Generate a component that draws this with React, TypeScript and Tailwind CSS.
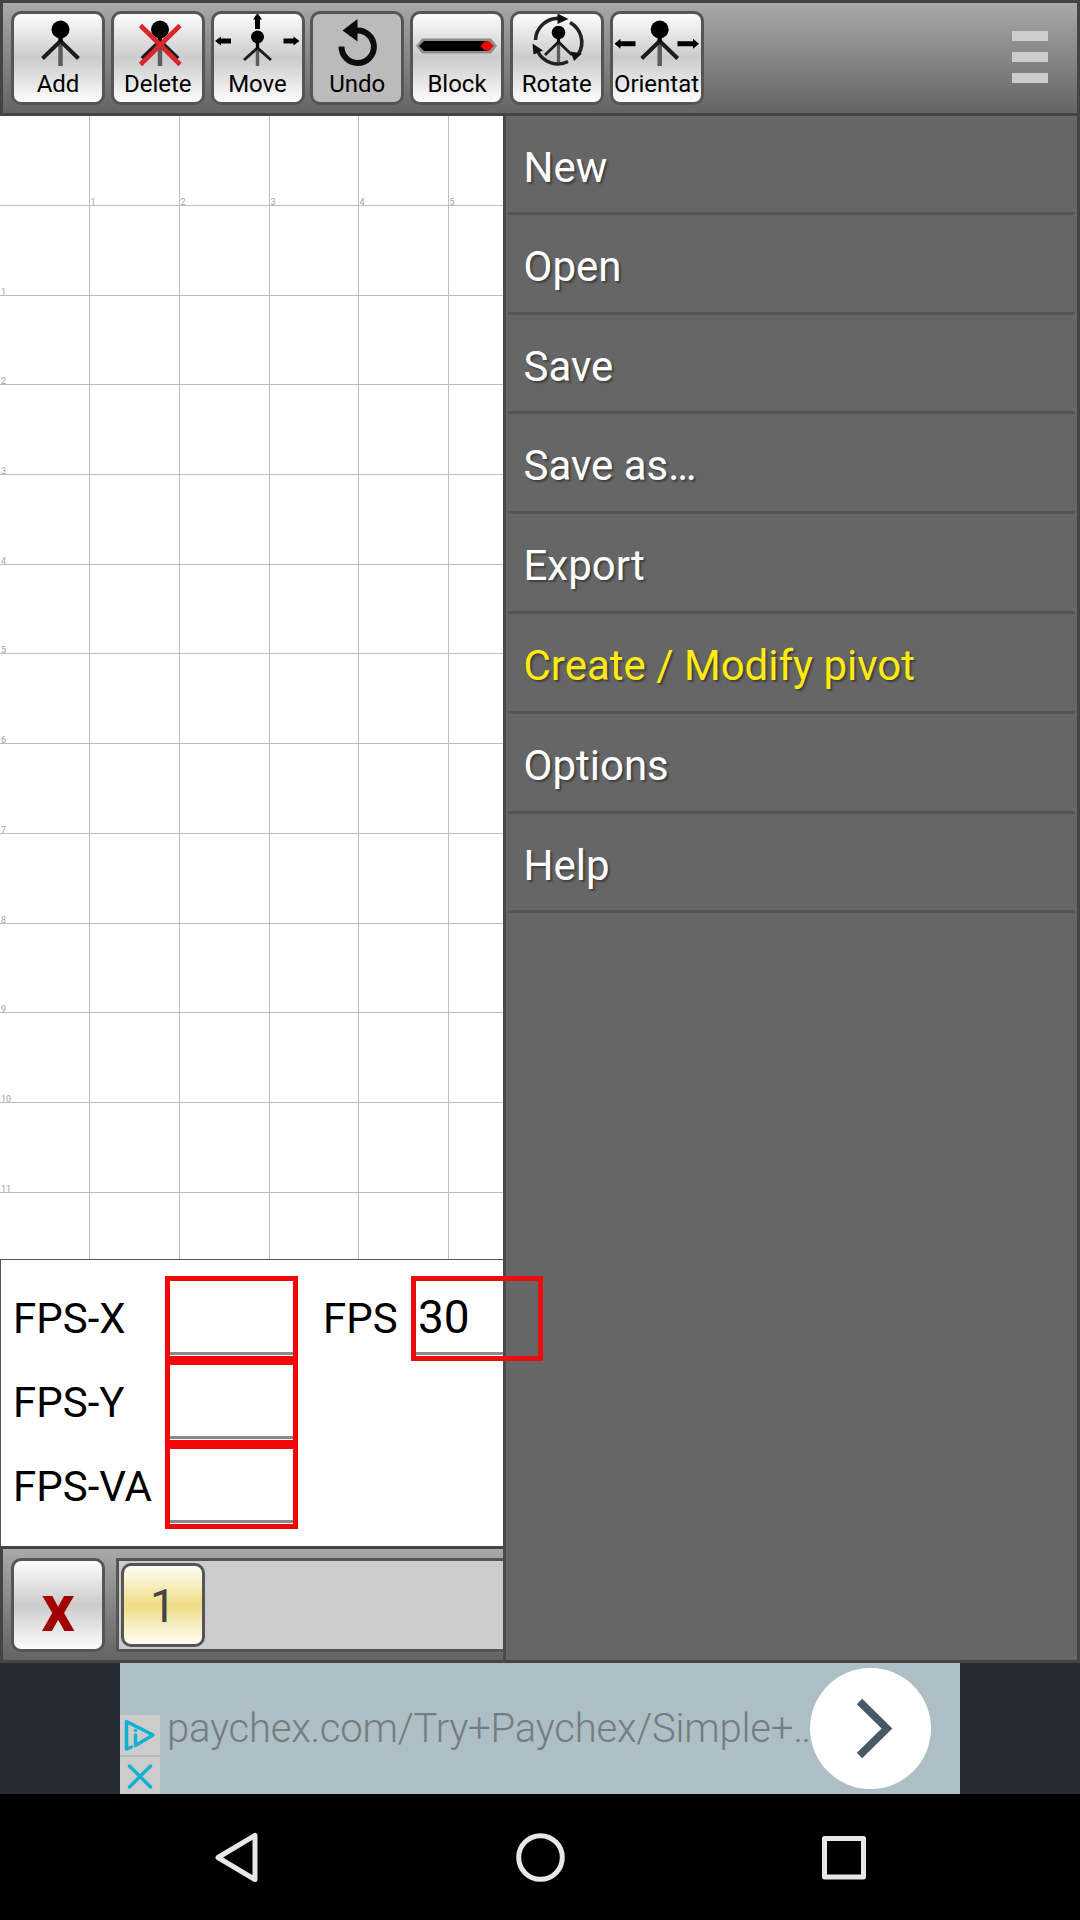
import type { ReactNode } from "react";

type FigureProps = { x: number; headY: number; r: number; neck: number; reach: number; handY: number; footY: number; w?: number };

function Figure({ x, headY, r, neck, reach, handY, footY, w = 4 }: FigureProps) {
  return (
    <g fill="none">
      <path d={`M${x} ${headY}V${footY}`} stroke="#5c5c5c" strokeWidth={w + 0.5} />
      <path d={`M${x - reach} ${handY}L${x} ${neck}L${x + reach} ${handY}`} stroke="#1c1c1c" strokeWidth={w} />
      <circle cx={x} cy={headY} r={r} fill="#000" />
      <path d={`M${x} ${headY}V${neck + 1}`} stroke="#000" strokeWidth={w} />
    </g>
  );
}

function Icon({ children }: { children: ReactNode }) {
  return (
    <svg viewBox="0 0 88 54" className="block h-[54px] w-[88px] shrink-0 overflow-visible">
      {children}
    </svg>
  );
}

const big = { headY: 15.5, r: 9, neck: 27, reach: 18, handY: 44.5, footY: 52 };

const tools = [
  { label: "Add", icon: <Figure x={46.5} {...big} /> },
  {
    label: "Delete",
    icon: (
      <>
        <Figure x={46} {...big} />
        <path d="M26.5 11.5L66 50.5M66 11.5L26.5 50.5" stroke="#d9262a" strokeWidth="4.6" />
      </>
    ),
  },
  {
    label: "Move",
    icon: (
      <>
        <Figure x={43.5} headY={23} r={6.5} neck={34} reach={13.5} handY={46} footY={52} w={3} />
        <path d="M43.5 -1l4.5 6.5h-2V15h-5V5.5h-2z" />
        <path d="M1 27l6-4.5v2h10v5H7v2z" />
        <path d="M85.5 27l-6-4.5v2h-10v5h10v2z" />
      </>
    ),
  },
  {
    label: "Undo",
    icon: (
      <>
        <path d="M28.5 32.5A16.2 16.2 0 1 0 44 16.6" fill="none" stroke="#0c0c0c" strokeWidth="6" />
        <path d="M29.5 16.5L44.5 5V27.5z" fill="#0c0c0c" />
      </>
    ),
  },
  {
    label: "Block",
    icon: (
      <>
        <path d="M3 32l6-7.5h69L84 32l-6 7.5H9z" fill="#8d8d8d" />
        <path d="M6 32l5-5h63l6 5l-6 5H11z" />
        <path d="M67.5 32l4-4.5h5l4 4.5l-4 4.5h-5z" fill="#f00" />
      </>
    ),
  },
  {
    label: "Rotate",
    icon: (
      <>
        <Figure x={45.5} headY={18.5} r={6.8} neck={28} reach={13.5} handY={41} footY={48} w={2.8} />
        <path
          d="M22.5 26A22.5 22.5 0 0 1 47 4.5M57 8.5A22.5 22.5 0 0 1 65.5 40M55 47.5A22.5 22.5 0 0 1 25 38"
          fill="none"
          stroke="#222"
          strokeWidth="3.6"
        />
        <path d="M44.5 -0.5L55.5 5L44.5 10zM57.5 37.5l11.5 2l-8 7.5zM19.5 29.5l10.5 7l-9.5 4z" fill="#111" />
      </>
    ),
  },
  {
    label: "Orientat",
    icon: (
      <>
        <Figure x={46.7} {...big} />
        <path d="M1.5 29.7l6-5v2.5h15v5h-15v2.5z" />
        <path d="M86 29.7l-6-5v2.5H64.5v5H80v2.5z" />
      </>
    ),
  },
];

const menu = ["New", "Open", "Save", "Save as…", "Export", "Create / Modify pivot", "Options", "Help"];
const STEP = 89.7;

function Grid() {
  return (
    <svg viewBox="0 0 503 1143" className="block h-[1143px] w-[503px] shrink-0" fontFamily="Roboto, sans-serif" fontSize="9" fill="#a3a3a3">
      {Array.from({ length: 5 }, (_, i) => {
        const x = Math.floor((i + 1) * STEP);
        return (
          <g key={i}>
            <rect x={x} y={0} width={1} height={1143} fill="#bdbdbd" />
            <text x={x + 1.5} y={89}>{i + 1}</text>
          </g>
        );
      })}
      {Array.from({ length: 12 }, (_, i) => {
        const y = Math.floor((i + 1) * STEP - 0.3);
        return (
          <g key={i}>
            <rect x={0} y={y} width={503} height={1} fill="#bdbdbd" />
            {i > 0 && <text x={1} y={y}>{i}</text>}
          </g>
        );
      })}
    </svg>
  );
}

function Header() {
  return (
    <header className="flex h-[116px] shrink-0 justify-between border-[3px] border-[#444] bg-linear-to-b from-[#a9a9a9] to-[#646464] pt-2 pr-[29px] pl-2">
      <div className="flex gap-[5.75px]">
        {tools.map((t) => (
          <button
            key={t.label}
            className={
              "flex h-[94px] w-[94px] flex-col overflow-hidden rounded-[10px] border-[3px] border-[#555] " +
              (t.label === "Undo" ? "bg-[#bbb]" : "bg-linear-to-b from-[#fdfdfd] via-[#cbcbcb] to-[#fdfdfd]")
            }
          >
            <Icon>{t.icon}</Icon>
            <span className="w-full text-center text-[24px] leading-[32px] whitespace-nowrap text-black">{t.label}</span>
          </button>
        ))}
      </div>
      <div className="mt-5 flex w-9 flex-col gap-[11px]">
        <i className="h-2.5 bg-[#ccc]" />
        <i className="h-2.5 bg-[#ccc]" />
        <i className="h-2.5 bg-[#ccc]" />
      </div>
    </header>
  );
}

function FpsPanel() {
  return (
    <section className="flex h-[287px] shrink-0 border-t border-l border-[#555] bg-white pt-4 pl-3 text-[42px] text-black">
      <div className="flex w-[152px] shrink-0 flex-col">
        {["FPS-X", "FPS-Y", "FPS-VA"].map((l) => (
          <span key={l} className="h-[84px] leading-[85px] whitespace-nowrap">{l}</span>
        ))}
      </div>
      <div className="flex w-[133px] shrink-0 flex-col">
        {[0, 1, 2].map((i) => (
          <div key={i} className="-mb-px flex h-[85px] shrink-0 flex-col justify-end border-[5px] border-[#f20808] pb-px">
            <i className="h-[3px] bg-[#8a8a88]" />
          </div>
        ))}
      </div>
      <span className="ml-[25px] w-[88px] shrink-0 leading-[85px]">FPS</span>
      <div className="relative z-10 flex h-[85px] w-[132px] shrink-0 flex-col justify-end border-[5px] border-[#e80e0e] pb-px">
        <span className="pl-0.5 text-[46px] leading-[70px]">30</span>
        <i className="h-[3px] w-[87px] bg-[#8a8a88]" />
      </div>
    </section>
  );
}

function FrameBar() {
  return (
    <section className="flex h-[117px] shrink-0 gap-[11px] border-y-[3px] border-l-[3px] border-[#444] bg-linear-to-b from-[#a9a9a9] to-[#646464] pt-[9px] pl-2">
      <button className="h-[94px] w-[94px] shrink-0 rounded-[10px] border-[3px] border-[#555] bg-linear-to-b from-[#fdfdfd] via-[#cbcbcb] to-[#fdfdfd] text-center text-[66px] font-bold text-[#a00000]">
        <span className="block pt-1 leading-[88px]">x</span>
      </button>
      <div className="h-[94px] grow border-y-[3px] border-l-[3px] border-[#555] bg-[#ccc] pt-0.5 pl-0.5">
        <button className="block h-[84px] w-[84px] rounded-[10px] border-[3px] border-[#555] bg-linear-to-b from-[#fffdf4] via-[#efdd85] to-[#fffdf4] text-center text-[46px] leading-[80px] text-[#444]">
          1
        </button>
      </div>
    </section>
  );
}

function SideMenu() {
  return (
    <nav className="grow border-r-[3px] border-b-[3px] border-l-[3px] border-r-[#444] border-b-[#444] border-l-[#4a4a4a] bg-[#666] pr-0.5 pl-0.5">
      {menu.map((m, i) => (
        <div
          key={m}
          className={
            "border-b-[3px] border-[#555] pl-[15.5px] text-[42px] leading-[104.6px] whitespace-nowrap [text-shadow:2px_2px_2px_#3f3f3f] " +
            (i === 0 ? "h-[98.8px] " : "h-[99.8px] ") +
            (i === 5 ? "text-[#ffeb0f]" : "text-white")
          }
        >
          {m}
        </div>
      ))}
    </nav>
  );
}

function Ad() {
  return (
    <section className="flex h-[131px] shrink-0 justify-center bg-[#262a33]">
      <div className="flex w-[840px] bg-[#aebec5]">
        <div className="flex w-10 shrink-0 flex-col justify-end gap-0.5">
          <svg viewBox="0 0 40 40" className="h-10 w-10 bg-[#ccc]" fill="none" stroke="#12b0d3" strokeWidth="3.5" strokeLinejoin="round" strokeLinecap="round">
            <path d="M11.5 32L6.5 34V6.5L33 20L15.5 30.5V20" />
            <path d="M15.5 15.5v.1" />
          </svg>
          <svg viewBox="0 0 40 37" className="h-[37px] w-10 bg-[#ccc]" fill="none" stroke="#12b0d3" strokeWidth="3.5" strokeLinecap="round">
            <path d="M9.5 9l21 21M30.5 9l-21 21" />
          </svg>
        </div>
        <span className="w-[650px] shrink-0 pl-[7px] text-[40px] leading-[131px] font-light tracking-[-0.2px] whitespace-nowrap text-[#737c82]">
          paychex.com/Try+Paychex/Simple+…
        </span>
        <div className="mt-[5px] flex h-[121px] w-[121px] shrink-0 rounded-full bg-white">
          <svg viewBox="0 0 121 121" className="h-full w-full" fill="none" stroke="#455a64" strokeWidth="7.5">
            <path d="M49.5 33.5L77 60.5L49.5 87.5" />
          </svg>
        </div>
      </div>
    </section>
  );
}

function NavBar() {
  return (
    <footer className="flex h-[126px] shrink-0 bg-black">
      <svg viewBox="0 0 1080 126" className="h-[126px] w-[1080px]" fill="none" stroke="#e8e8e8" strokeWidth="5" strokeLinejoin="round">
        <path d="M255 41.5V85.5L218 63.5z" />
        <circle cx="540.5" cy="63.5" r="21.8" />
        <rect x="824.5" y="44.5" width="39" height="38.5" />
      </svg>
    </footer>
  );
}

export default function App() {
  return (
    <main className="flex h-[1920px] w-[1080px] flex-col overflow-hidden bg-white font-[Roboto,sans-serif]">
      <Header />
      <div className="flex h-[1547px] shrink-0">
        <div className="flex w-[503px] shrink-0 flex-col">
          <Grid />
          <FpsPanel />
          <FrameBar />
        </div>
        <SideMenu />
      </div>
      <Ad />
      <NavBar />
    </main>
  );
}
